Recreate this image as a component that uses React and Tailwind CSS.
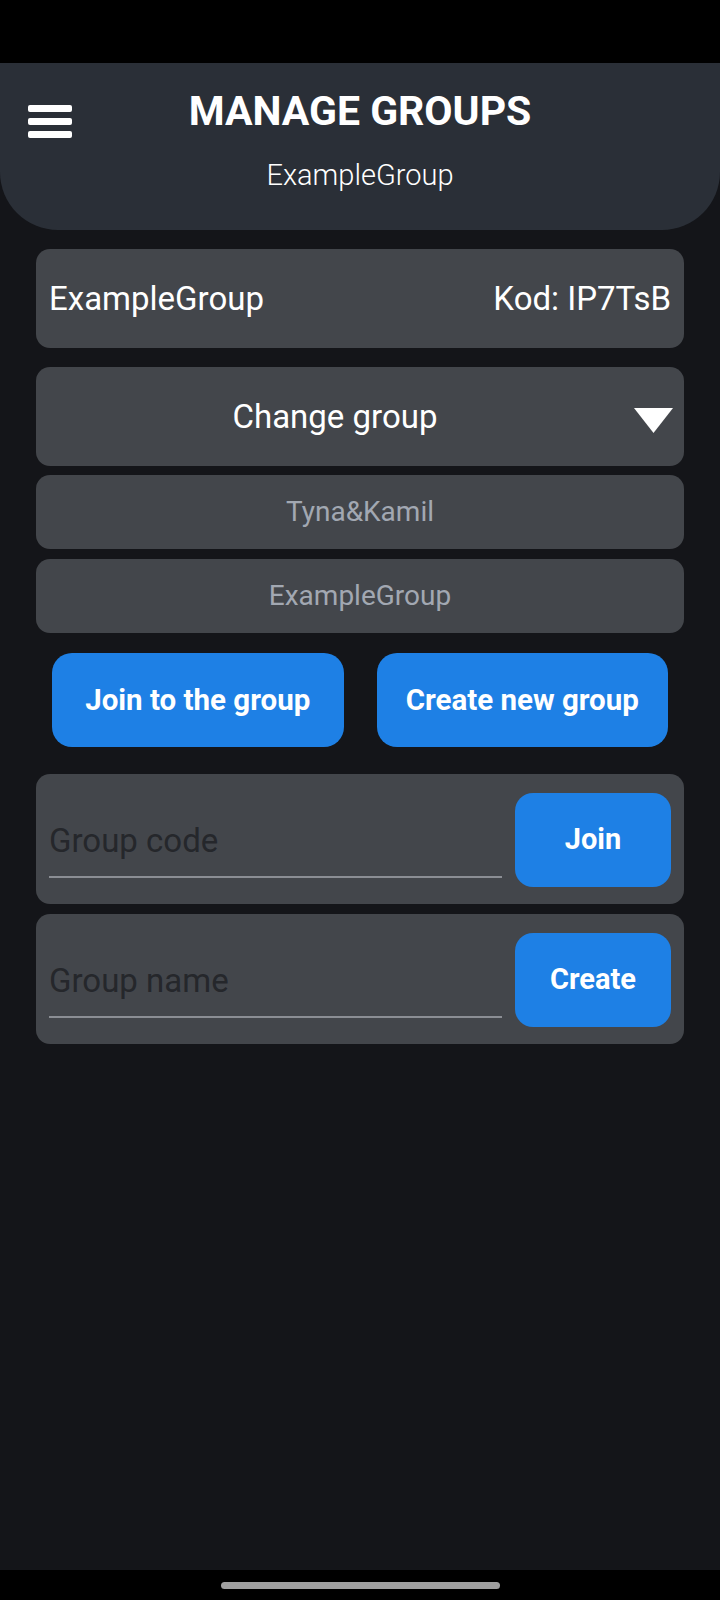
import { useState } from 'react';

const GROUPS = ['Tyna&Kamil', 'ExampleGroup'];

const GroupForm = ({ placeholder, action }) => {
  const [value, setValue] = useState('');
  return (
    <div className="flex gap-[13px] rounded-[14px] bg-[#43464b] px-[13px] pt-[19px] pb-[17px]">
      <div className="flex flex-1 flex-col justify-end pb-[9px]">
        <input
          value={value}
          onChange={e => setValue(e.target.value)}
          placeholder={placeholder}
          className="w-full border-b-2 border-[#8b8e94] bg-transparent pb-[16px] text-[33px] leading-[38px] text-white outline-none placeholder:text-[#25272b]"
        />
      </div>
      <button className="h-[94px] w-[156px] rounded-[18px] bg-[#1e80e5] text-[29px] font-bold text-white">
        {action}
      </button>
    </div>
  );
};

const App = () => {
  return (
    <div className="flex h-[1600px] w-[720px] flex-col bg-black font-['Roboto',sans-serif]">
      {/* status bar */}
      <div className="h-[63px] shrink-0 bg-black" />

      <div className="flex flex-1 flex-col bg-[#141519]">
        {/* Header */}
        <header className="grid grid-cols-[1fr_auto_1fr] rounded-b-[58px] bg-[#2a2f37] pt-[25px] pb-[38px]">
          <button className="ml-[28px] mt-[17px] flex w-[44px] flex-col gap-[6px] self-start">
            <span className="h-[7px] w-[44px] rounded-[2px] bg-white" />
            <span className="h-[7px] w-[44px] rounded-[2px] bg-white" />
            <span className="h-[7px] w-[44px] rounded-[2px] bg-white" />
          </button>
          <div className="flex flex-col items-center">
            <h1 className="text-[41px] font-bold leading-[47px] text-white">MANAGE GROUPS</h1>
            <p className="mt-[24px] text-[29px] font-light leading-[33px] text-white">ExampleGroup</p>
          </div>
          <div />
        </header>

        <div className="flex flex-col px-[36px] pt-[19px]">
          {/* Current group */}
          <div className="flex h-[99px] items-center justify-between rounded-[14px] bg-[#43464b] px-[13px] text-[33px] text-white">
            <span>ExampleGroup</span>
            <span>Kod: IP7TsB</span>
          </div>

          {/* Change group */}
          <div className="mt-[19px] flex h-[99px] items-center rounded-[14px] bg-[#43464b] pr-[11px] text-white">
            <span className="flex-1 text-center text-[33px]">Change group</span>
            <svg width="39" height="25" viewBox="0 0 39 25" className="mt-[8px]">
              <polygon points="0,0 39,0 19.5,25" fill="white" />
            </svg>
          </div>

          {GROUPS.map((g, i) => (
            <div
              key={g}
              className={`${i === 0 ? 'mt-[9px]' : 'mt-[10px]'} flex h-[74px] items-center justify-center rounded-[14px] bg-[#43464b] text-[28px] text-[#a2a8b2]`}
            >
              {g}
            </div>
          ))}

          {/* Actions */}
          <div className="mt-[20px] flex gap-[33px] px-[16px]">
            <button className="h-[94px] flex-1 rounded-[20px] bg-[#1e80e5] text-[29.5px] font-bold text-white">
              Join to the group
            </button>
            <button className="h-[94px] flex-1 rounded-[20px] bg-[#1e80e5] text-[29.5px] font-bold text-white">
              Create new group
            </button>
          </div>

          <div className="mt-[27px] flex flex-col gap-[10px]">
            <GroupForm placeholder="Group code" action="Join" />
            <GroupForm placeholder="Group name" action="Create" />
          </div>
        </div>
      </div>

      {/* nav bar */}
      <div className="flex h-[30px] shrink-0 items-start justify-center bg-black pt-[12px]">
        <div className="h-[7px] w-[279px] rounded-full bg-[#a0a0a0]" />
      </div>
    </div>
  );
};

export default App;
